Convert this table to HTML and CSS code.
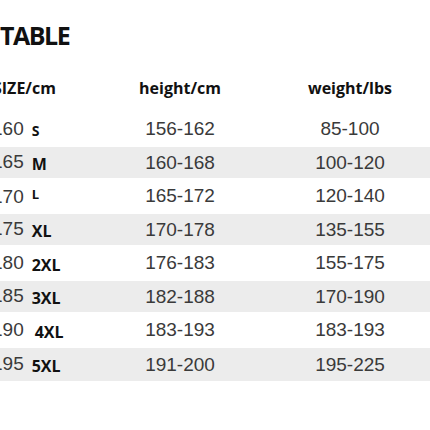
FILE: index.html
```html
<!DOCTYPE html>
<html>
<head>
<meta charset="utf-8">
<link rel="stylesheet" href="styles.css">
</head>
<body>
<h1 class="title">TABLE</h1>
<div class="table">
  <div class="row head">
    <div class="c1">SIZE/cm</div>
    <div class="c2">height/cm</div>
    <div class="c3">weight/lbs</div>
  </div>
  <div class="row"><div class="c1"><span class="num">160</span><span class="sz small">S</span></div><div class="c2">156-162</div><div class="c3">85-100</div></div>
  <div class="row alt"><div class="c1"><span class="num">165</span><span class="sz">M</span></div><div class="c2">160-168</div><div class="c3">100-120</div></div>
  <div class="row"><div class="c1"><span class="num">170</span><span class="sz raised">L</span></div><div class="c2">165-172</div><div class="c3">120-140</div></div>
  <div class="row alt"><div class="c1"><span class="num">175</span><span class="sz">XL</span></div><div class="c2">170-178</div><div class="c3">135-155</div></div>
  <div class="row"><div class="c1"><span class="num">180</span><span class="sz">2XL</span></div><div class="c2">176-183</div><div class="c3">155-175</div></div>
  <div class="row alt"><div class="c1"><span class="num">185</span><span class="sz">3XL</span></div><div class="c2">182-188</div><div class="c3">170-190</div></div>
  <div class="row"><div class="c1"><span class="num">190</span><span class="sz wide">4XL</span></div><div class="c2">183-193</div><div class="c3">183-193</div></div>
  <div class="row alt last"><div class="c1"><span class="num">195</span><span class="sz">5XL</span></div><div class="c2">191-200</div><div class="c3">195-225</div></div>
</div>
</body>
</html>
```
FILE: styles.css
```css
html, body {
  margin: 0;
  padding: 0;
  background: #ffffff;
}
body {
  width: 430px;
  height: 430px;
  overflow: hidden;
}
.title {
  margin: 20px 0 0 0;
  font: 700 25px/30px "Open Sans", sans-serif;
  letter-spacing: -1.5px;
  color: #111111;
}
.table {
  margin: 28px 0 0 -7px;
  width: 437px;
}
.row {
  display: grid;
  grid-template-columns: 107px 160px 1fr;
  align-items: center;
  height: 36px;
  font: 400 19px/22px "Liberation Sans", Arial, sans-serif;
  color: #3a3a3a;
}
.row.alt {
  background: #ececec;
  height: 31px;
}
.row.last {
  height: 33px;
}
.row.head {
  height: 33px;
  align-items: start;
  font: 700 16px/20px "Open Sans", sans-serif;
  color: #111111;
}
.c2, .c3 {
  text-align: center;
}
.c3 {
  padding-left: 10px;
}
.c1 {
  white-space: nowrap;
}
.c1 .num {
  margin-left: -1px;
}
.sz {
  margin-left: 8px;
  font: 700 16px/20px "Open Sans", sans-serif;
  color: #111111;
  vertical-align: -2px;
}
.sz.small {
  font-size: 14px;
  vertical-align: -1px;
}
.sz.raised {
  font-size: 13px;
  vertical-align: 4px;
}
.sz.wide {
  margin-left: 11px;
}
```
